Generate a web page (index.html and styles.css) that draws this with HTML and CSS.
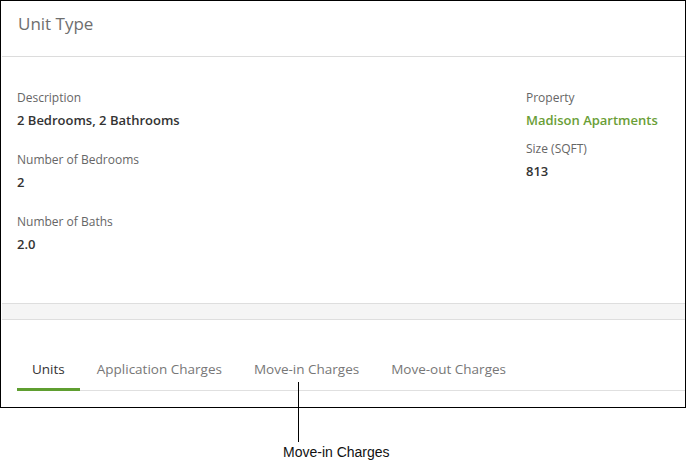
FILE: index.html
```html
<!DOCTYPE html>
<html>
<head>
<meta charset="utf-8">
<link rel="stylesheet" href="styles.css">
</head>
<body>
<div class="canvas">
  <div class="frame">
    <div class="card-header">Unit Type</div>
    <div class="details">
      <div class="col col-left">
        <div class="field">
          <div class="label">Description</div>
          <div class="value">2 Bedrooms, 2 Bathrooms</div>
        </div>
        <div class="field">
          <div class="label">Number of Bedrooms</div>
          <div class="value">2</div>
        </div>
        <div class="field">
          <div class="label">Number of Baths</div>
          <div class="value">2.0</div>
        </div>
      </div>
      <div class="col col-right">
        <div class="field">
          <div class="label">Property</div>
          <div class="value link">Madison Apartments</div>
        </div>
        <div class="field">
          <div class="label">Size (SQFT)</div>
          <div class="value">813</div>
        </div>
      </div>
    </div>
    <div class="band"></div>
    <div class="tabs-area">
      <div class="tabs">
        <div class="tab active">Units</div>
        <div class="tab">Application Charges</div>
        <div class="tab">Move-in Charges</div>
        <div class="tab">Move-out Charges</div>
      </div>
    </div>
  </div>
  <div class="callout-line"></div>
  <div class="callout-text">Move-in Charges</div>
</div>
</body>
</html>
```
FILE: styles.css
```css
html, body {
  margin: 0;
  padding: 0;
  background: #fff;
}
.canvas {
  position: relative;
  width: 687px;
  height: 470px;
}
.frame {
  box-sizing: border-box;
  width: 686px;
  height: 408px;
  border: 1px solid #000;
  font-family: "Open Sans", Lato, sans-serif;
  display: flex;
  flex-direction: column;
}
.card-header {
  height: 56px;
  box-sizing: border-box;
  padding: 12px 16px 0;
  font-size: 17px;
  line-height: 22px;
  color: #6e6e6e;
  border-bottom: 1px solid #dcdcdc;
  margin: 0 0 0 1px;
}
.details {
  display: flex;
  justify-content: space-between;
  padding: 31px 0 0 16px;
  height: 246px;
  box-sizing: border-box;
}
.field {
  display: flex;
  flex-direction: column;
  gap: 2px;
}
.col {
  display: flex;
  flex-direction: column;
}
.col-left { gap: 20px; }
.col-right { gap: 9px; width: 159px; }
.label {
  font-size: 12px;
  line-height: 20px;
  color: #666;
}
.value {
  font-size: 13px;
  line-height: 20px;
  font-weight: 600;
  color: #333;
}
.value.link {
  color: #6a9e36;
}
.band {
  height: 15px;
  background: #f5f5f5;
  border-top: 1px solid #dedede;
  border-bottom: 1px solid #dedede;
  margin-left: 1px;
}
.tabs-area {
  padding: 30px 0 0 16px;
}
.tabs {
  display: flex;
  gap: 2px;
  border-bottom: 1px solid #e0e0e0;
}
.tab {
  font-size: 13.5px;
  line-height: 20px;
  color: #777;
  padding: 9px 15px 9px;
  border-bottom: 3px solid transparent;
  margin-bottom: -1px;
}
.tab.active {
  color: #333;
  border-bottom-color: #5f9e30;
}
.callout-line {
  position: absolute;
  left: 298px;
  top: 382px;
  width: 1px;
  height: 60px;
  background: #000;
}
.callout-text {
  position: absolute;
  left: 283px;
  top: 443px;
  font-family: "Liberation Sans", Arial, sans-serif;
  font-size: 14px;
  line-height: 18px;
  color: #111;
}
```
